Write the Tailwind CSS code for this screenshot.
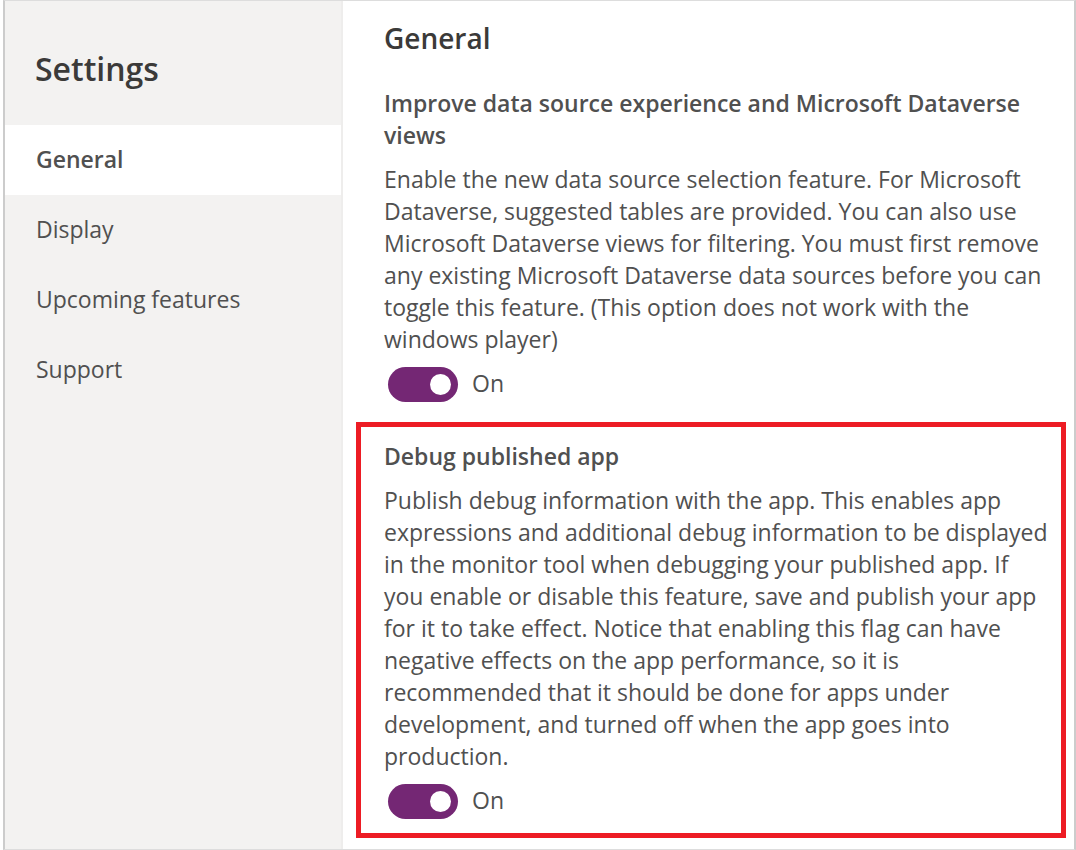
<!DOCTYPE html>
<html lang="en">
<head>
  <meta charset="UTF-8" />
  <meta name="viewport" content="width=device-width, initial-scale=1.0"/>
  <title>Settings</title>
  <script src="https://cdn.jsdelivr.net/npm/@tailwindcss/browser@4"></script>
</head>
<body class="bg-white pl-[3px] font-['Open_Sans',sans-serif] text-[23px] leading-[32px] text-[#505050]">
  <div class="flex min-h-screen border-x-2 border-y border-x-[#cccccc] border-y-[#dddddd]">

    <!-- Sidebar -->
    <aside class="w-[338px] shrink-0 border-r-2 border-[#eeedec] bg-[#f3f2f1]">
      <h1 class="px-[30px] pt-[48px] pb-[36px] text-[32px] leading-[40px] font-semibold text-[#3b3a39]">Settings</h1>
      <nav class="flex flex-col">
        <a href="#general" class="bg-white px-[31px] pt-[18px] pb-5 font-semibold">General</a>
        <a href="#display" class="px-[31px] pt-[18px] pb-5">Display</a>
        <a href="#upcoming" class="px-[31px] pt-[18px] pb-5">Upcoming features</a>
        <a href="#support" class="px-[31px] pt-[18px] pb-5">Support</a>
      </nav>
    </aside>

    <!-- General settings -->
    <main id="general" class="min-w-0 flex-1 pr-2 pl-[13px]">
      <h2 class="pt-[17px] pl-[28px] text-[28px] leading-[40px] font-semibold text-[#3b3a39]">General</h2>

      <section class="pt-[29px] pl-[28px]">
        <h3 class="font-semibold">Improve data source experience and Microsoft Dataverse<br>views</h3>
        <p class="pt-3 whitespace-nowrap">
          Enable the new data source selection feature. For Microsoft<br>
          Dataverse, suggested tables are provided. You can also use<br>
          Microsoft Dataverse views for filtering. You must first remove<br>
          any existing Microsoft Dataverse data sources before you can<br>
          toggle this feature. (This option does not work with the<br>
          windows player)
        </p>
        <label class="mt-3 ml-1 flex w-fit items-start gap-[14px]">
          <input type="checkbox" role="switch" checked class="flex h-[35px] w-[70px] appearance-none items-center rounded-full bg-[#742774] px-[7px] before:size-[21px] before:rounded-full before:bg-white checked:justify-end">
          <span>On</span>
        </label>
      </section>

      <section class="mt-[20px] border-5 border-[#ed1c24] pt-[13px] pb-[14px] pl-[23px]">
        <h3 class="font-semibold">Debug published app</h3>
        <p class="pt-3 whitespace-nowrap">
          Publish debug information with the app. This enables app<br>
          expressions and additional debug information to be displayed<br>
          in the monitor tool when debugging your published app. If<br>
          you enable or disable this feature, save and publish your app<br>
          for it to take effect. Notice that enabling this flag can have<br>
          negative effects on the app performance, so it is<br>
          recommended that it should be done for apps under<br>
          development, and turned off when the app goes into<br>
          production.
        </p>
        <label class="mt-3 ml-1 flex w-fit items-start gap-[14px]">
          <input type="checkbox" role="switch" checked class="flex h-[35px] w-[70px] appearance-none items-center rounded-full bg-[#742774] px-[7px] before:size-[21px] before:rounded-full before:bg-white checked:justify-end">
          <span>On</span>
        </label>
      </section>
    </main>
  </div>
</body>
</html>
